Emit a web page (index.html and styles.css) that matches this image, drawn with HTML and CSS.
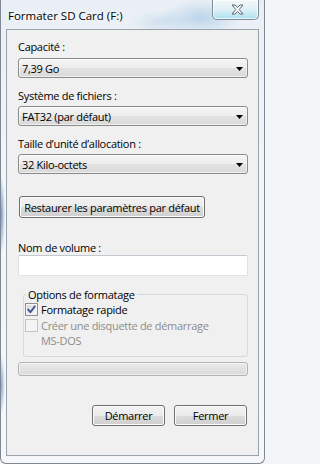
FILE: index.html
```html
<!DOCTYPE html>
<html lang="fr">
<head>
<meta charset="utf-8">
<title>Formater SD Card (F:)</title>
<link rel="stylesheet" href="styles.css">
</head>
<body>
<div class="window">
  <div class="titlebar">
    <span class="title">Formater SD Card (F:)</span>
    <div class="close">
      <svg width="13" height="11" viewBox="-1 -1 13 11"><polygon points="0,0 3,0 5.5,2.6 8,0 11,0 7.2,4.5 11,9 8,9 5.5,6.4 3,9 0,9 3.8,4.5" fill="#ffffff" stroke="#5a636d" stroke-width="1" stroke-linejoin="round"/></svg>
    </div>
  </div>
  <div class="client">
    <div class="label first">Capacité :</div>
    <div class="combo">
      <span class="combo-text">7,39 Go</span>
      <svg class="arrow" width="7" height="4" viewBox="0 0 7 4"><polygon points="0,0 7,0 3.5,4" fill="#000"/></svg>
    </div>
    <div class="label">Système de fichiers :</div>
    <div class="combo">
      <span class="combo-text">FAT32 (par défaut)</span>
      <svg class="arrow" width="7" height="4" viewBox="0 0 7 4"><polygon points="0,0 7,0 3.5,4" fill="#000"/></svg>
    </div>
    <div class="label">Taille d’unité d’allocation :</div>
    <div class="combo">
      <span class="combo-text">32 Kilo-octets</span>
      <svg class="arrow" width="7" height="4" viewBox="0 0 7 4"><polygon points="0,0 7,0 3.5,4" fill="#000"/></svg>
    </div>
    <div class="btn restore">Restaurer les paramètres par défaut</div>
    <div class="label volume">Nom de volume :</div>
    <div class="textbox"></div>
    <fieldset class="group">
      <legend class="legend">Options de formatage</legend>
      <div class="check-row">
        <span class="checkbox checked">
          <svg width="11" height="11" viewBox="0 0 11 11"><path d="M2.2 5.6 L4.4 8.2 L8.8 2.4" fill="none" stroke="#3f5594" stroke-width="1.9" stroke-linecap="round" stroke-linejoin="round"/></svg>
        </span>
        <span class="check-text">Formatage rapide</span>
      </div>
      <div class="check-row disabled">
        <span class="checkbox"></span>
        <span class="check-text">Créer une disquette de démarrage<br>MS-DOS</span>
      </div>
    </fieldset>
    <div class="progress"></div>
    <div class="actions">
      <div class="btn action">Démarrer</div>
      <div class="btn action">Fermer</div>
    </div>
  </div>
</div>
</body>
</html>
```

FILE: styles.css
```css
html, body {
  margin: 0;
  padding: 0;
  background: #f3f6f9;
}

body {
  width: 265px;
  height: 464px;
  overflow: hidden;
  font-family: "Open Sans", "Noto Sans", sans-serif;
  font-size: 11px;
  letter-spacing: -0.3px;
  color: #000;
}

.window {
  box-sizing: border-box;
  width: 265px;
  height: 464px;
  display: flex;
  flex-direction: column;
  border: 1px solid #7d8893;
  border-top: none;
  border-radius: 0 0 6px 6px;
  background:
    radial-gradient(ellipse 40px 18px at 200px 18px, rgba(150, 190, 225, 0.55), rgba(150, 190, 225, 0) 100%),
    radial-gradient(ellipse 30px 12px at 160px 22px, rgba(170, 200, 230, 0.4), rgba(170, 200, 230, 0) 100%),
    radial-gradient(ellipse 4px 40px at 0px 215px, rgba(60, 110, 200, 0.7), rgba(60, 110, 200, 0) 100%),
    radial-gradient(ellipse 4px 30px at 0px 385px, rgba(60, 110, 200, 0.6), rgba(60, 110, 200, 0) 100%),
    linear-gradient(to bottom, #e9eff5 0%, #f2f6f9 40%, #f5f7fa 100%);
}

.titlebar {
  height: 29px;
  flex: none;
  display: flex;
  align-items: flex-start;
  padding: 0 5px 0 7px;
}

.title {
  margin-top: 8px;
  line-height: 15px;
  font-size: 11.5px;
  letter-spacing: 0;
  text-shadow: 0 0 6px #ffffff, 0 0 3px #ffffff;
}

.close {
  margin-left: auto;
  box-sizing: border-box;
  width: 47px;
  height: 20px;
  border: 1px solid #7f8c98;
  border-top: none;
  border-radius: 0 0 5px 5px;
  background: linear-gradient(to bottom, #f1f7fa 0%, #e3f1f7 45%, #c6e9f4 75%, #a9e0f1 100%);
  box-shadow: inset 0 0 0 1px rgba(255, 255, 255, 0.7);
  display: flex;
  align-items: center;
  justify-content: center;
  padding-left: 3px;
}

.client {
  box-sizing: border-box;
  height: 427px;
  margin: 0 5px;
  border: 1px solid #9aa3ab;
  background: #f0f0f0;
  padding: 9px 10px 0 11px;
  display: flex;
  flex-direction: column;
}

.label {
  line-height: 15px;
  margin-top: 10px;
  margin-bottom: 3px;
}

.label.first {
  margin-top: 0;
  margin-bottom: 4px;
}

.combo {
  box-sizing: border-box;
  height: 20px;
  display: flex;
  align-items: center;
  border: 1px solid #8b8b8b;
  border-radius: 3px;
  background: linear-gradient(to bottom, #f5f5f5 0%, #ededed 50%, #e2e2e2 51%, #d9d9d9 100%);
  box-shadow: inset 0 0 0 1px rgba(255, 255, 255, 0.6);
  padding: 0 4px 0 3px;
}

.combo-text {
  flex: 1;
  line-height: 15px;
}

.arrow {
  flex: none;
  margin-top: 1px;
}

.btn {
  box-sizing: border-box;
  display: flex;
  align-items: center;
  justify-content: center;
  border: 1px solid #707070;
  border-radius: 3px;
  background: linear-gradient(to bottom, #f2f2f2 0%, #ebebeb 50%, #dddddd 51%, #cfcfcf 100%);
  box-shadow: inset 0 0 0 1px #fbfbfb;
  line-height: 15px;
  white-space: nowrap;
}

.restore {
  align-self: flex-start;
  width: 186px;
  height: 22px;
  margin-top: 22px;
  margin-left: 1px;
}

.label.volume {
  margin-top: 22px;
  margin-bottom: 0;
}

.textbox {
  box-sizing: border-box;
  height: 21px;
  background: #ffffff;
  border: 1px solid #dfe2e8;
  border-top-color: #c4c8d0;
  border-radius: 2px;
}

.group {
  margin: 11px 0 0 5px;
  padding: 0 0 8px 1px;
  border: 1px solid #d5d9dd;
  border-radius: 3px;
  min-width: 0;
}

.legend {
  padding: 0 2px;
  margin-left: 1px;
  line-height: 15px;
}

.check-row {
  display: flex;
  align-items: flex-start;
  gap: 3px;
  line-height: 15px;
}

.check-row + .check-row {
  margin-top: 1px;
}

.checkbox {
  box-sizing: border-box;
  flex: none;
  width: 13px;
  height: 13px;
  margin-top: 1px;
  border: 1px solid #8e8f8f;
  background: linear-gradient(135deg, #d3d6db 0%, #f3f3f3 80%, #fafafa 100%);
  box-shadow: inset 0 0 0 1px #f4f4f4;
  display: flex;
  align-items: center;
  justify-content: center;
}

.checkbox svg {
  display: block;
}

.disabled .checkbox {
  border-color: #c4c4c4;
  background: #f4f4f4;
  box-shadow: none;
}

.disabled .check-text {
  color: #8d8d8d;
}

.progress {
  box-sizing: border-box;
  height: 14px;
  margin-top: 5px;
  border: 1px solid #b2b2b2;
  border-radius: 3px;
  background: linear-gradient(to bottom, #eaeaea 0%, #e2e2e2 50%, #dadada 100%);
  box-shadow: inset 0 0 0 1px rgba(255, 255, 255, 0.55);
}

.actions {
  display: flex;
  justify-content: flex-end;
  gap: 9px;
  margin-top: 29px;
  margin-right: 1px;
}

.action {
  width: 73px;
  height: 21px;
}
```
